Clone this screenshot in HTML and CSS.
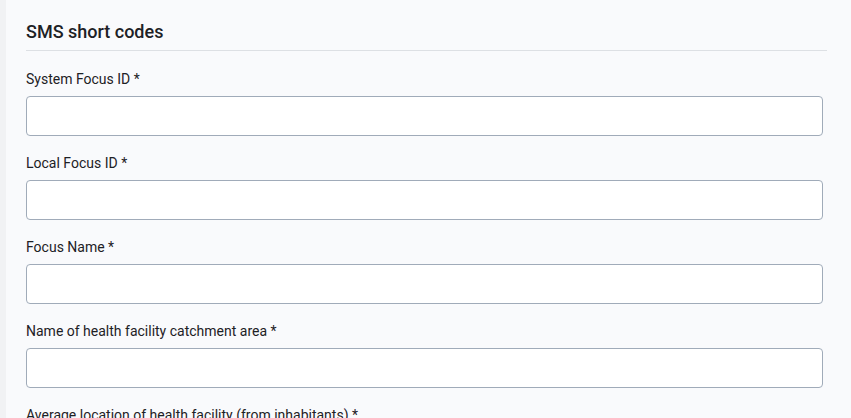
FILE: index.html
```html
<!DOCTYPE html>
<html>
<head>
<meta charset="utf-8">
<link rel="stylesheet" href="styles.css">
</head>
<body>
<div class="page">
  <div class="rail"></div>
  <main class="content">
    <h2 class="title">SMS short codes</h2>
    <form class="form">
      <div class="field">
        <label class="label">System Focus ID *</label>
        <input class="input" type="text">
      </div>
      <div class="field">
        <label class="label">Local Focus ID *</label>
        <input class="input" type="text">
      </div>
      <div class="field">
        <label class="label">Focus Name *</label>
        <input class="input" type="text">
      </div>
      <div class="field">
        <label class="label">Name of health facility catchment area *</label>
        <input class="input" type="text">
      </div>
      <div class="field">
        <label class="label">Average location of health facility (from inhabitants) *</label>
        <input class="input" type="text">
      </div>
    </form>
  </main>
</div>
</body>
</html>
```
FILE: styles.css
```css
html, body {
  margin: 0;
  padding: 0;
  height: 100%;
  overflow: hidden;
}
body {
  font-family: Roboto, "Liberation Sans", sans-serif;
  color: #1d2125;
  background: #f9fafc;
}
.page {
  display: flex;
  min-height: 100%;
}
.rail {
  width: 6px;
  flex: 0 0 6px;
  background: #f1f2f4;
}
.content {
  flex: 1;
  padding: 20px 24px 0 20px;
}
.title {
  margin: 0;
  font-size: 18px;
  line-height: 24px;
  font-weight: 500;
  padding-bottom: 6px;
  border-bottom: 1px solid #dde0e4;
}
.form {
  margin-top: 18px;
  margin-right: 4px;
}
.field {
  display: flex;
  flex-direction: column;
  margin-bottom: 17px;
}
.label {
  font-size: 14px;
  line-height: 20px;
  margin-bottom: 7px;
}
.input {
  box-sizing: border-box;
  height: 40px;
  width: 100%;
  margin: 0;
  border: 1px solid #a0abb9;
  border-radius: 4px;
  background: #fff;
  font: inherit;
  padding: 0 12px;
}
```
